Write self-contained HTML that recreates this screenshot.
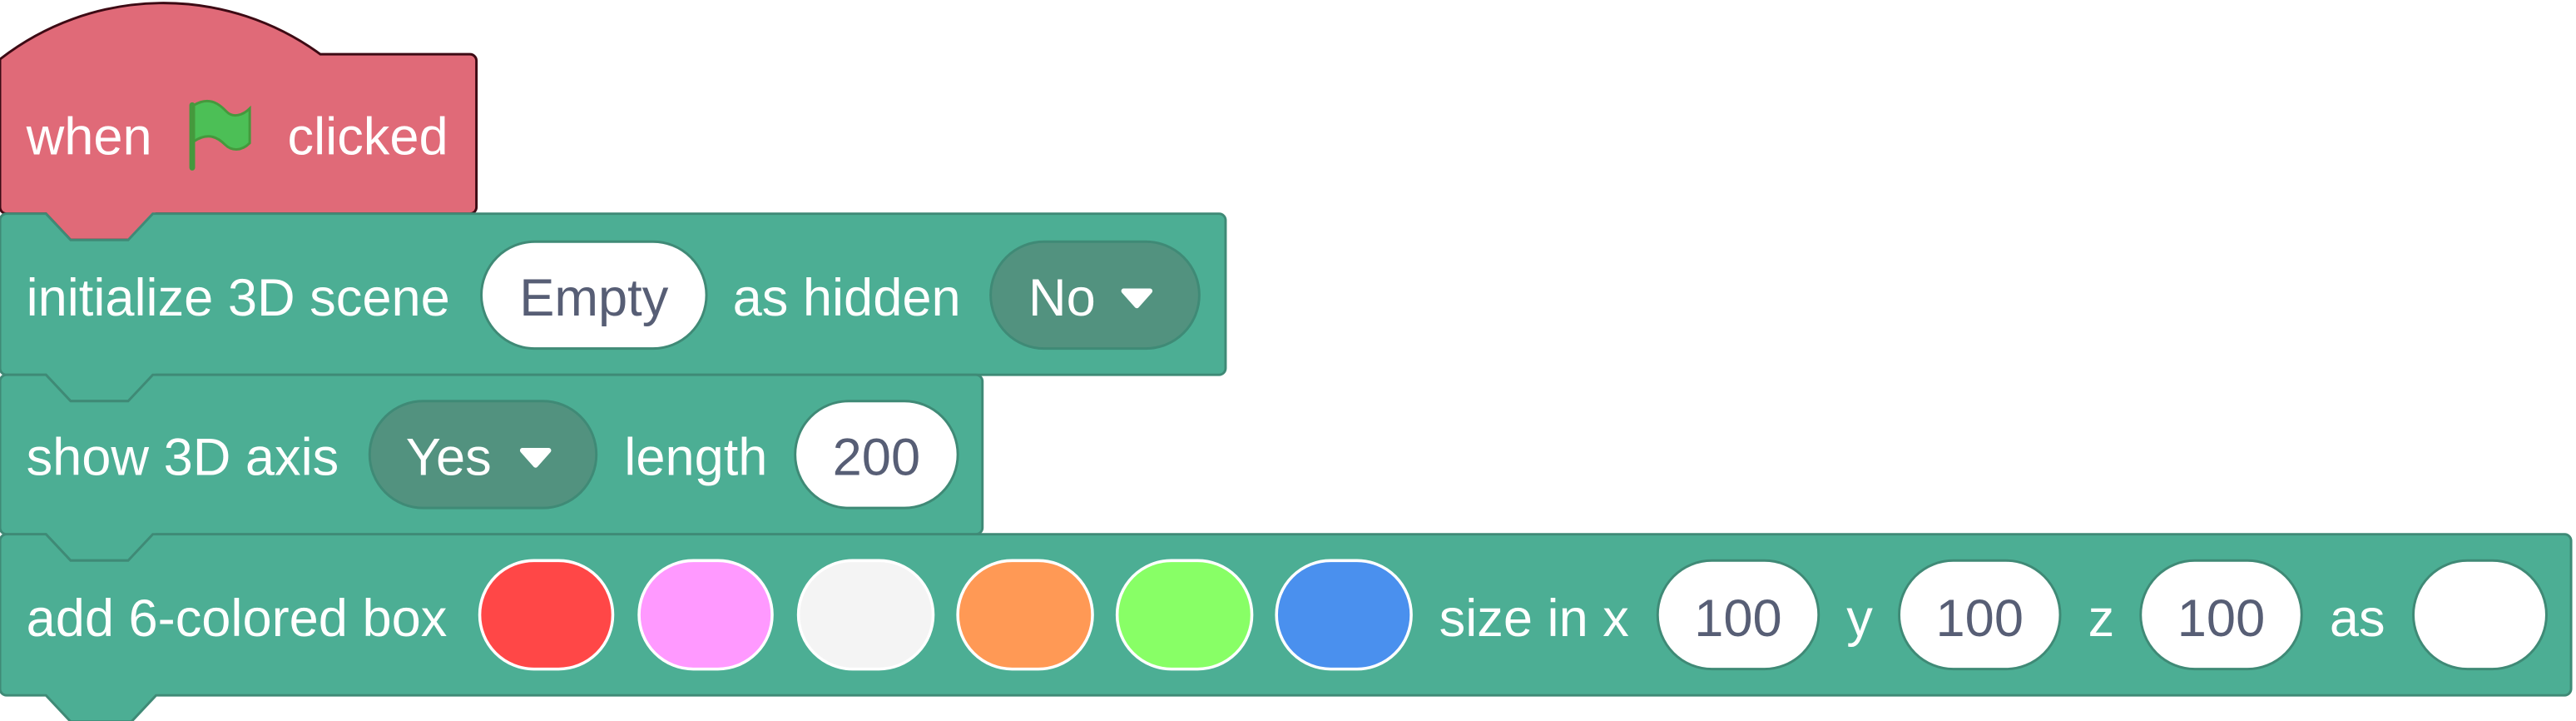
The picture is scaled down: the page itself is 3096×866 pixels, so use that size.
<!DOCTYPE html>
<html><head><meta charset="utf-8"><style>
html,body{margin:0;padding:0;background:#fff;}
svg{display:block;}
text{font-family:"Liberation Sans",Arial,sans-serif;font-size:32px;}
.w{fill:#fff;}
.g{fill:#575e75;}
</style></head><body>
<svg width="3096" height="866" viewBox="0 0 1568 438.6" preserveAspectRatio="none" xmlns="http://www.w3.org/2000/svg">
<!-- hat block -->
<path d="M0,36 A162,162 0 0 1 195,33 H286 a4,4 0 0 1 4,4 V126 a4,4 0 0 1 -4,4 H95 l-15,16 H43 l-15,-16 H4 a4,4 0 0 1 -4,-4 Z" fill="#e06a78" stroke="#3d0a14" stroke-width="1.5"/>
<text x="16" y="94" class="w">when</text>
<path d="M117,64 V102" stroke="#45993d" stroke-width="3.5" stroke-linecap="round"/>
<path d="M118,64 C128,58 134,64 138,68 C142,72 148,70 152,66 V87 C147,92 141,92 137,88 C133,84 127,80 118,86 Z" fill="#4cbf56" stroke="#45993d" stroke-width="1.5"/>
<text x="175" y="94" class="w">clicked</text>

<!-- block 1 -->
<path d="M0,134 a4,4 0 0 1 4,-4 H28 l15,16 H78 l15,-16 H742 a4,4 0 0 1 4,4 V224 a4,4 0 0 1 -4,4 H95 l-15,16 H43 l-15,-16 H4 a4,4 0 0 1 -4,-4 Z" fill="#4cae94" stroke="#3f8a76" stroke-width="1.5"/>
<text x="16" y="192" class="w">initialize 3D scene</text>
<rect x="293" y="147" width="137" height="65" rx="32.5" fill="#fff" stroke="#3f8a76" stroke-width="1.5"/>
<text x="361.5" y="192" class="g" text-anchor="middle">Empty</text>
<text x="446" y="192" class="w">as hidden</text>
<rect x="603" y="147" width="127" height="65" rx="32.5" fill="#52927f" stroke="#3f8a76" stroke-width="1.5"/>
<text x="626" y="192" class="w">No</text>
<path d="M684,177 H700 L692,186 Z" fill="#fff" stroke="#fff" stroke-width="3" stroke-linejoin="round"/>

<!-- block 2 -->
<path d="M0,232 a4,4 0 0 1 4,-4 H28 l15,16 H78 l15,-16 H594 a4,4 0 0 1 4,4 V321 a4,4 0 0 1 -4,4 H95 l-15,16 H43 l-15,-16 H4 a4,4 0 0 1 -4,-4 Z" fill="#4cae94" stroke="#3f8a76" stroke-width="1.5"/>
<text x="16" y="289" class="w">show 3D axis</text>
<rect x="225" y="244" width="138" height="65" rx="32.5" fill="#52927f" stroke="#3f8a76" stroke-width="1.5"/>
<text x="247" y="289" class="w">Yes</text>
<path d="M318,274 H334 L326,283 Z" fill="#fff" stroke="#fff" stroke-width="3" stroke-linejoin="round"/>
<text x="380" y="289" class="w">length</text>
<rect x="484" y="244" width="99" height="65" rx="32.5" fill="#fff" stroke="#3f8a76" stroke-width="1.5"/>
<text x="533.5" y="289" class="g" text-anchor="middle">200</text>

<!-- block 3 -->
<path d="M0,329 a4,4 0 0 1 4,-4 H28 l15,16 H78 l15,-16 H1561 a4,4 0 0 1 4,4 V419 a4,4 0 0 1 -4,4 H95 l-15,16 H43 l-15,-16 H4 a4,4 0 0 1 -4,-4 Z" fill="#4cae94" stroke="#3f8a76" stroke-width="1.5"/>
<text x="16" y="387" class="w">add 6-colored box</text>
<rect x="292" y="341" width="81" height="66" rx="33" fill="#ff4747" stroke="#fff" stroke-width="1.8"/>
<rect x="389" y="341" width="81" height="66" rx="33" fill="#ff99ff" stroke="#fff" stroke-width="1.8"/>
<rect x="486" y="341" width="82" height="66" rx="33" fill="#f4f4f4" stroke="#fff" stroke-width="1.8"/>
<rect x="583" y="341" width="82" height="66" rx="33" fill="#ff9955" stroke="#fff" stroke-width="1.8"/>
<rect x="680" y="341" width="82" height="66" rx="33" fill="#88ff66" stroke="#fff" stroke-width="1.8"/>
<rect x="777" y="341" width="82" height="66" rx="33" fill="#4a90ee" stroke="#fff" stroke-width="1.8"/>
<text x="876" y="387" class="w">size in x</text>
<rect x="1009" y="341" width="98" height="66" rx="33" fill="#fff" stroke="#3f8a76" stroke-width="1.5"/>
<text x="1058" y="387" class="g" text-anchor="middle">100</text>
<text x="1124" y="387" class="w">y</text>
<rect x="1156" y="341" width="98" height="66" rx="33" fill="#fff" stroke="#3f8a76" stroke-width="1.5"/>
<text x="1205" y="387" class="g" text-anchor="middle">100</text>
<text x="1271" y="387" class="w">z</text>
<rect x="1303" y="341" width="98" height="66" rx="33" fill="#fff" stroke="#3f8a76" stroke-width="1.5"/>
<text x="1352" y="387" class="g" text-anchor="middle">100</text>
<text x="1418" y="387" class="w">as</text>
<rect x="1469" y="341" width="81" height="66" rx="33" fill="#fff" stroke="#3f8a76" stroke-width="1.5"/>
</svg>
</body></html>
